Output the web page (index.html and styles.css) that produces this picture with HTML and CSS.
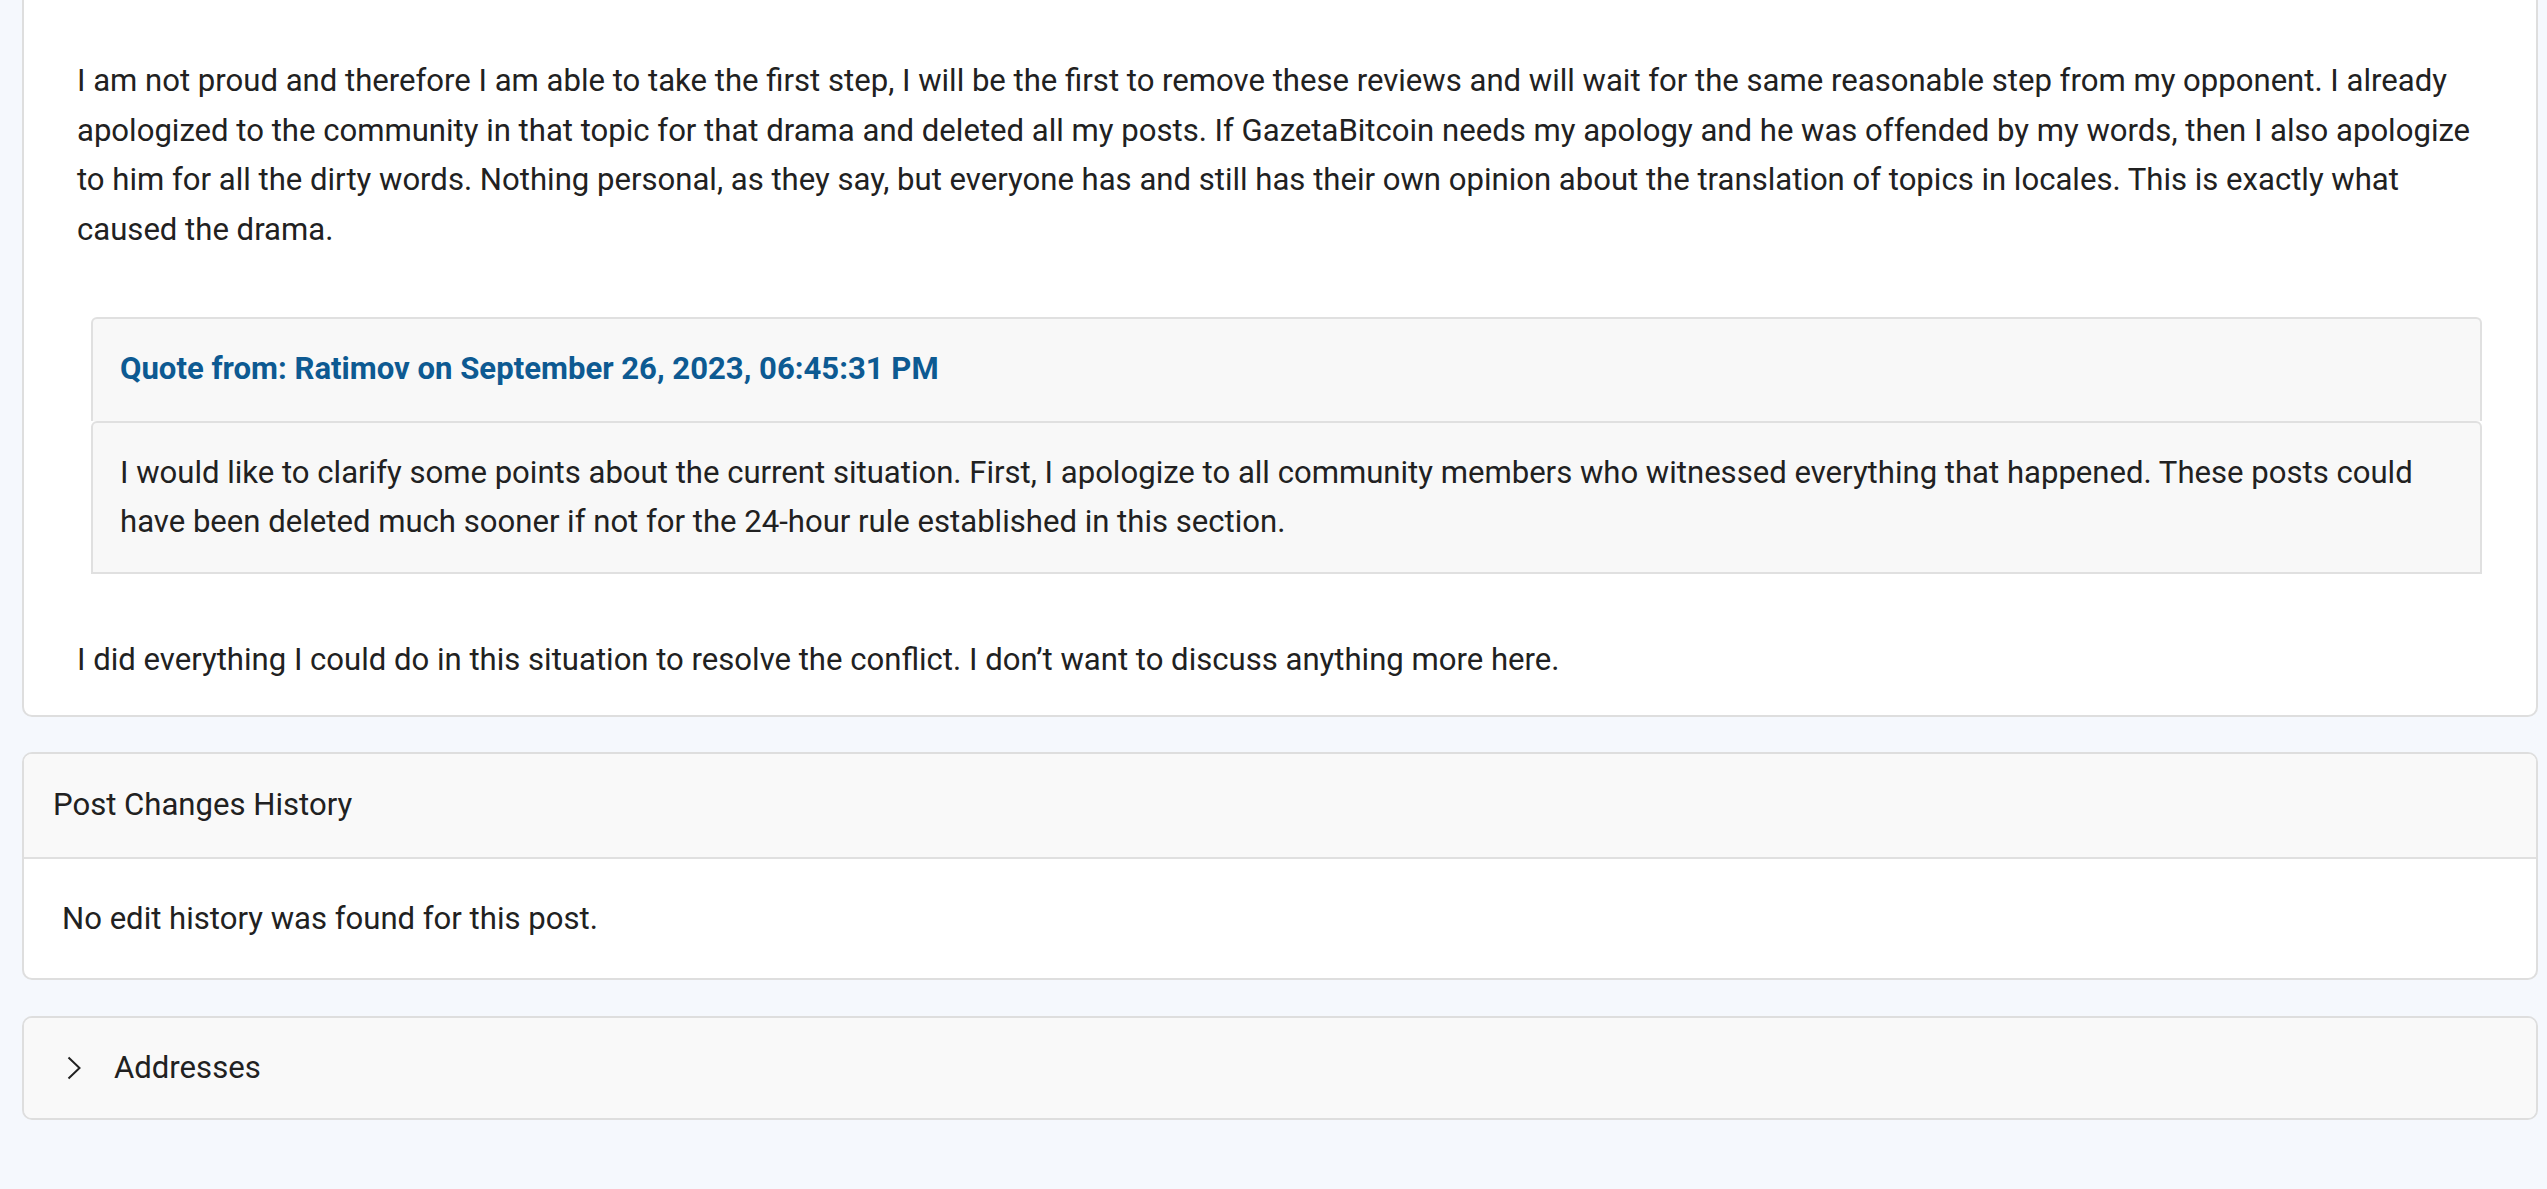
FILE: index.html
```html
<!DOCTYPE html>
<html lang="en">
<head>
    <meta charset="UTF-8">
    <meta name="viewport" content="width=device-width, initial-scale=1.0">
    <title>Post</title>
    <link rel="stylesheet" href="styles.css">
</head>
<body>
    <div class="page">
        <div class="card post">
            <p>I am not proud and therefore I am able to take the first step, I will be the first to remove these reviews and will wait for the same reasonable step from my opponent. I already apologized to the community in that topic for that drama and deleted all my posts. If GazetaBitcoin needs my apology and he was offended by my words, then I also apologize to him for all the dirty words. Nothing personal, as they say, but everyone has and still has their own opinion about the translation of topics in locales. This is exactly what caused the drama.</p>
            <div class="quote">
                <div class="quote-header"><a href="#">Quote from: Ratimov on September 26, 2023, 06:45:31 PM</a></div>
                <div class="quote-body">I would like to clarify some points about the current situation. First, I apologize to all community members who witnessed everything that happened. These posts could have been deleted much sooner if not for the 24-hour rule established in this section.</div>
            </div>
            <p>I did everything I could do in this situation to resolve the conflict. I don’t want to discuss anything more here.</p>
        </div>

        <div class="card history">
            <div class="card-header">Post Changes History</div>
            <div class="card-body">No edit history was found for this post.</div>
        </div>

        <div class="card addresses">
            <div class="card-header toggle">
                <svg class="chevron" width="14" height="24" viewBox="0 0 14 24"><polyline points="1.5,1.5 12.5,12 1.5,22.5" fill="none" stroke="#222" stroke-width="2"/></svg>
                <span>Addresses</span>
            </div>
        </div>
    </div>
</body>
</html>
```

FILE: styles.css
```css
body {
    margin: 0;
    background: #f5f8fd;
    font-family: Roboto, "Liberation Sans", sans-serif;
    color: #212121;
    font-size: 31.1px;
    line-height: 49.5px;
}
.page {
    padding: 0 9px 70px 22px;
}
.card {
    background: #fff;
    border: 2px solid #dedede;
    border-radius: 10px;
    margin-bottom: 36px;
    overflow: hidden;
}
.post {
    margin-top: -30px;
    padding: 84px 54px 31px 53px;
    margin-bottom: 35px;
}
.post p {
    margin: 0;
}
.quote {
    margin: 63px 0 61px 14px;
}
.quote-header {
    background: #f8f8f8;
    border: 2px solid #e0e0e0;
    border-bottom: none;
    border-radius: 6px 6px 0 0;
    padding: 25px 27px 27px;
}
.quote-header a {
    color: #0d5a92;
    font-weight: bold;
    text-decoration: none;
}
.quote-body {
    background: #f8f8f8;
    border: 2px solid #e0e0e0;
    border-radius: 6px 6px 0 0;
    padding: 25px 27px;
}
.card-header {
    background: #f9f9f9;
    padding: 26px 29px 27px;
}
.history .card-header {
    border-bottom: 2px solid #e0e0e0;
}
.card-body {
    padding: 35px 38px 35px;
}
.addresses {
    margin-bottom: 0;
}
.toggle {
    display: flex;
    align-items: center;
    gap: 33px;
    padding: 25px 43px 25.5px;
}
.chevron {
    flex-shrink: 0;
}
```
